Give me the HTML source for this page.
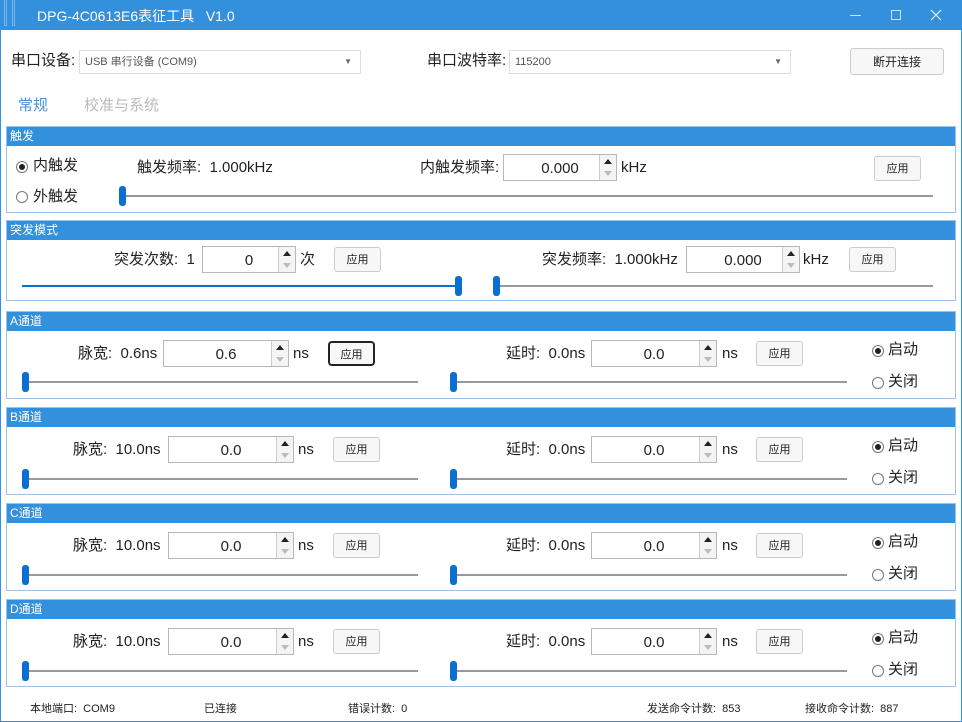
<!DOCTYPE html>
<html><head><meta charset="utf-8"><style>
*{box-sizing:border-box;margin:0;padding:0}
body{width:962px;height:722px;position:relative;background:#fff;font-family:"Liberation Sans","Noto Sans CJK SC",sans-serif;color:#222;overflow:hidden}
.a{position:absolute;white-space:nowrap}
.tb{left:0;top:0;width:962px;height:30px;background:#3390dc;color:#fff}
.win{left:0;top:30px;width:962px;height:692px;border:1px solid #3390dc;border-top:none}
.panel{position:absolute;left:6px;width:950px;border:1px solid #9cc4e8;height:88px}
.ph{position:absolute;left:0;top:0;right:0;height:19px;background:#3390dc;color:#fff;font-size:12px;line-height:19px;padding-left:3px}
.lbl{font-size:15px;line-height:20px}
.inp{position:absolute;height:27px;border:1px solid #b8b8b8;background:#fff;font-size:15px;text-align:center;line-height:28px}
.inp .sp{position:absolute;right:0;top:0;width:17px;height:25px;border-left:1px solid #ccc;background:#f4f4f4}
.sp:before{content:"";position:absolute;left:4px;top:4px;border:4px solid transparent;border-bottom:5px solid #222;border-top:none}
.sp:after{content:"";position:absolute;left:4px;top:16px;border:4px solid transparent;border-top:5px solid #bbb;border-bottom:none}
.btn{position:absolute;width:47px;height:25px;border:1px solid #ccc;border-radius:3px;background:#f7f7f7;font-size:11px;text-align:center;line-height:24px}
.trk{position:absolute;height:2px;background:#999}
.th{position:absolute;width:7px;height:20px;background:#0a6fd0;border-radius:3px}
.rad{position:absolute;width:12px;height:12px;border:1px solid #777;border-radius:50%;background:#fff}
.rad.on:after{content:"";position:absolute;left:2px;top:2px;width:6px;height:6px;border-radius:50%;background:#222}
.st{font-size:11px;top:700px}
</style></head><body>
<div class="a tb">
 <div class="a" style="left:4px;top:0;width:3px;height:26px;border:1px solid #7bb4e6;border-top:none"></div>
 <div class="a" style="left:12px;top:0;width:3px;height:26px;border:1px solid #7bb4e6;border-top:none"></div>
 <div class="a" style="left:37px;top:6px;font-size:14px">DPG-4C0613E6表征工具&nbsp;&nbsp;&nbsp;V1.0</div>
 <div class="a" style="left:850px;top:15px;width:11px;height:1px;background:#cfe4f7"></div>
 <div class="a" style="left:891px;top:10px;width:10px;height:10px;border:1px solid #cfe4f7"></div>
 <svg class="a" style="left:930px;top:9px" width="12" height="12"><path d="M1 1L11 11M11 1L1 11" stroke="#e6f0fa" stroke-width="1.2"/></svg>
</div>
<div class="a win"></div>
<div class="a lbl" style="left:11px;top:51px">串口设备:</div>
<div class="a" style="left:79px;top:50px;width:282px;height:24px;border:1px solid #ddd;font-size:11px;color:#555;line-height:22px;padding-left:5px">USB 串行设备 (COM9)<span style="position:absolute;right:8px;top:0;font-size:8px;color:#666">▼</span></div>
<div class="a lbl" style="left:427px;top:51px">串口波特率:</div>
<div class="a" style="left:509px;top:50px;width:282px;height:24px;border:1px solid #ddd;font-size:11px;color:#555;line-height:22px;padding-left:5px">115200<span style="position:absolute;right:8px;top:0;font-size:8px;color:#666">▼</span></div>
<div class="a" style="left:850px;top:48px;width:94px;height:27px;border:1px solid #ccc;border-radius:3px;background:#f7f7f7;font-size:12px;text-align:center;line-height:26px">断开连接</div>
<div class="a" style="left:18px;top:94px;font-size:15px;color:#4a8fd8">常规</div>
<div class="a" style="left:84px;top:94px;font-size:15px;color:#bbb">校准与系统</div>

<div class="panel" style="top:126px;height:87px"><div class="ph">触发</div></div>
<div class="rad on" style="left:16px;top:161px"></div><div class="a lbl" style="left:33px;top:156px">内触发</div>
<div class="rad" style="left:16px;top:191px"></div><div class="a lbl" style="left:33px;top:187px">外触发</div>
<div class="a lbl" style="left:137px;top:158px">触发频率:&nbsp;&nbsp;1.000kHz</div>
<div class="a lbl" style="left:420px;top:158px">内触发频率:</div>
<div class="inp" style="left:503px;top:154px;width:114px">0.000<div class="sp"></div></div>
<div class="a lbl" style="left:621px;top:158px">kHz</div>
<div class="btn" style="left:874px;top:156px">应用</div>
<div class="trk" style="left:120px;top:195px;width:813px"></div><div class="th" style="left:119px;top:186px"></div>

<div class="panel" style="top:220px;height:81px"><div class="ph">突发模式</div></div>
<div class="a lbl" style="left:114px;top:250px">突发次数:&nbsp;&nbsp;1</div>
<div class="inp" style="left:202px;top:246px;width:94px">0<div class="sp"></div></div>
<div class="a lbl" style="left:300px;top:250px">次</div>
<div class="btn" style="left:334px;top:247px">应用</div>
<div class="a lbl" style="left:542px;top:250px">突发频率:&nbsp;&nbsp;1.000kHz</div>
<div class="inp" style="left:686px;top:246px;width:114px">0.000<div class="sp"></div></div>
<div class="a lbl" style="left:803px;top:250px">kHz</div>
<div class="btn" style="left:849px;top:247px">应用</div>
<div class="trk" style="left:22px;top:285px;width:437px;background:#0a6fd0"></div><div class="th" style="left:455px;top:276px"></div>
<div class="trk" style="left:496px;top:285px;width:437px"></div><div class="th" style="left:493px;top:276px"></div>

<div class="panel" style="top:311px"><div class="ph">A通道</div></div>
<div class="a lbl" style="left:78px;top:344px">脉宽:&nbsp;&nbsp;0.6ns</div>
<div class="inp" style="left:163px;top:340px;width:126px">0.6<div class="sp"></div></div>
<div class="a lbl" style="left:293px;top:344px">ns</div>
<div class="btn" style="left:328px;top:341px;border:2px solid #222;border-radius:4px">应用</div>
<div class="a lbl" style="left:506px;top:344px">延时:&nbsp;&nbsp;0.0ns</div>
<div class="inp" style="left:591px;top:340px;width:126px">0.0<div class="sp"></div></div>
<div class="a lbl" style="left:722px;top:344px">ns</div>
<div class="btn" style="left:756px;top:341px">应用</div>
<div class="trk" style="left:23px;top:381px;width:395px"></div><div class="th" style="left:22px;top:372px"></div>
<div class="trk" style="left:452px;top:381px;width:395px"></div><div class="th" style="left:450px;top:372px"></div>
<div class="rad on" style="left:872px;top:345px"></div><div class="a lbl" style="left:888px;top:340px">启动</div>
<div class="rad" style="left:872px;top:377px"></div><div class="a lbl" style="left:888px;top:372px">关闭</div>

<div class="panel" style="top:407px"><div class="ph">B通道</div></div>
<div class="a lbl" style="left:73px;top:440px">脉宽:&nbsp;&nbsp;10.0ns</div>
<div class="inp" style="left:168px;top:436px;width:126px">0.0<div class="sp"></div></div>
<div class="a lbl" style="left:298px;top:440px">ns</div>
<div class="btn" style="left:333px;top:437px">应用</div>
<div class="a lbl" style="left:506px;top:440px">延时:&nbsp;&nbsp;0.0ns</div>
<div class="inp" style="left:591px;top:436px;width:126px">0.0<div class="sp"></div></div>
<div class="a lbl" style="left:722px;top:440px">ns</div>
<div class="btn" style="left:756px;top:437px">应用</div>
<div class="trk" style="left:23px;top:478px;width:395px"></div><div class="th" style="left:22px;top:469px"></div>
<div class="trk" style="left:452px;top:478px;width:395px"></div><div class="th" style="left:450px;top:469px"></div>
<div class="rad on" style="left:872px;top:441px"></div><div class="a lbl" style="left:888px;top:436px">启动</div>
<div class="rad" style="left:872px;top:473px"></div><div class="a lbl" style="left:888px;top:468px">关闭</div>

<div class="panel" style="top:503px"><div class="ph">C通道</div></div>
<div class="a lbl" style="left:73px;top:536px">脉宽:&nbsp;&nbsp;10.0ns</div>
<div class="inp" style="left:168px;top:532px;width:126px">0.0<div class="sp"></div></div>
<div class="a lbl" style="left:298px;top:536px">ns</div>
<div class="btn" style="left:333px;top:533px">应用</div>
<div class="a lbl" style="left:506px;top:536px">延时:&nbsp;&nbsp;0.0ns</div>
<div class="inp" style="left:591px;top:532px;width:126px">0.0<div class="sp"></div></div>
<div class="a lbl" style="left:722px;top:536px">ns</div>
<div class="btn" style="left:756px;top:533px">应用</div>
<div class="trk" style="left:23px;top:574px;width:395px"></div><div class="th" style="left:22px;top:565px"></div>
<div class="trk" style="left:452px;top:574px;width:395px"></div><div class="th" style="left:450px;top:565px"></div>
<div class="rad on" style="left:872px;top:537px"></div><div class="a lbl" style="left:888px;top:532px">启动</div>
<div class="rad" style="left:872px;top:569px"></div><div class="a lbl" style="left:888px;top:564px">关闭</div>

<div class="panel" style="top:599px"><div class="ph">D通道</div></div>
<div class="a lbl" style="left:73px;top:632px">脉宽:&nbsp;&nbsp;10.0ns</div>
<div class="inp" style="left:168px;top:628px;width:126px">0.0<div class="sp"></div></div>
<div class="a lbl" style="left:298px;top:632px">ns</div>
<div class="btn" style="left:333px;top:629px">应用</div>
<div class="a lbl" style="left:506px;top:632px">延时:&nbsp;&nbsp;0.0ns</div>
<div class="inp" style="left:591px;top:628px;width:126px">0.0<div class="sp"></div></div>
<div class="a lbl" style="left:722px;top:632px">ns</div>
<div class="btn" style="left:756px;top:629px">应用</div>
<div class="trk" style="left:23px;top:670px;width:395px"></div><div class="th" style="left:22px;top:661px"></div>
<div class="trk" style="left:452px;top:670px;width:395px"></div><div class="th" style="left:450px;top:661px"></div>
<div class="rad on" style="left:872px;top:633px"></div><div class="a lbl" style="left:888px;top:628px">启动</div>
<div class="rad" style="left:872px;top:665px"></div><div class="a lbl" style="left:888px;top:660px">关闭</div>

<div class="a st" style="left:30px">本地端口:&nbsp;&nbsp;COM9</div>
<div class="a st" style="left:204px">已连接</div>
<div class="a st" style="left:348px">错误计数:&nbsp;&nbsp;0</div>
<div class="a st" style="left:647px">发送命令计数:&nbsp;&nbsp;853</div>
<div class="a st" style="left:805px">接收命令计数:&nbsp;&nbsp;887</div>
</body></html>
